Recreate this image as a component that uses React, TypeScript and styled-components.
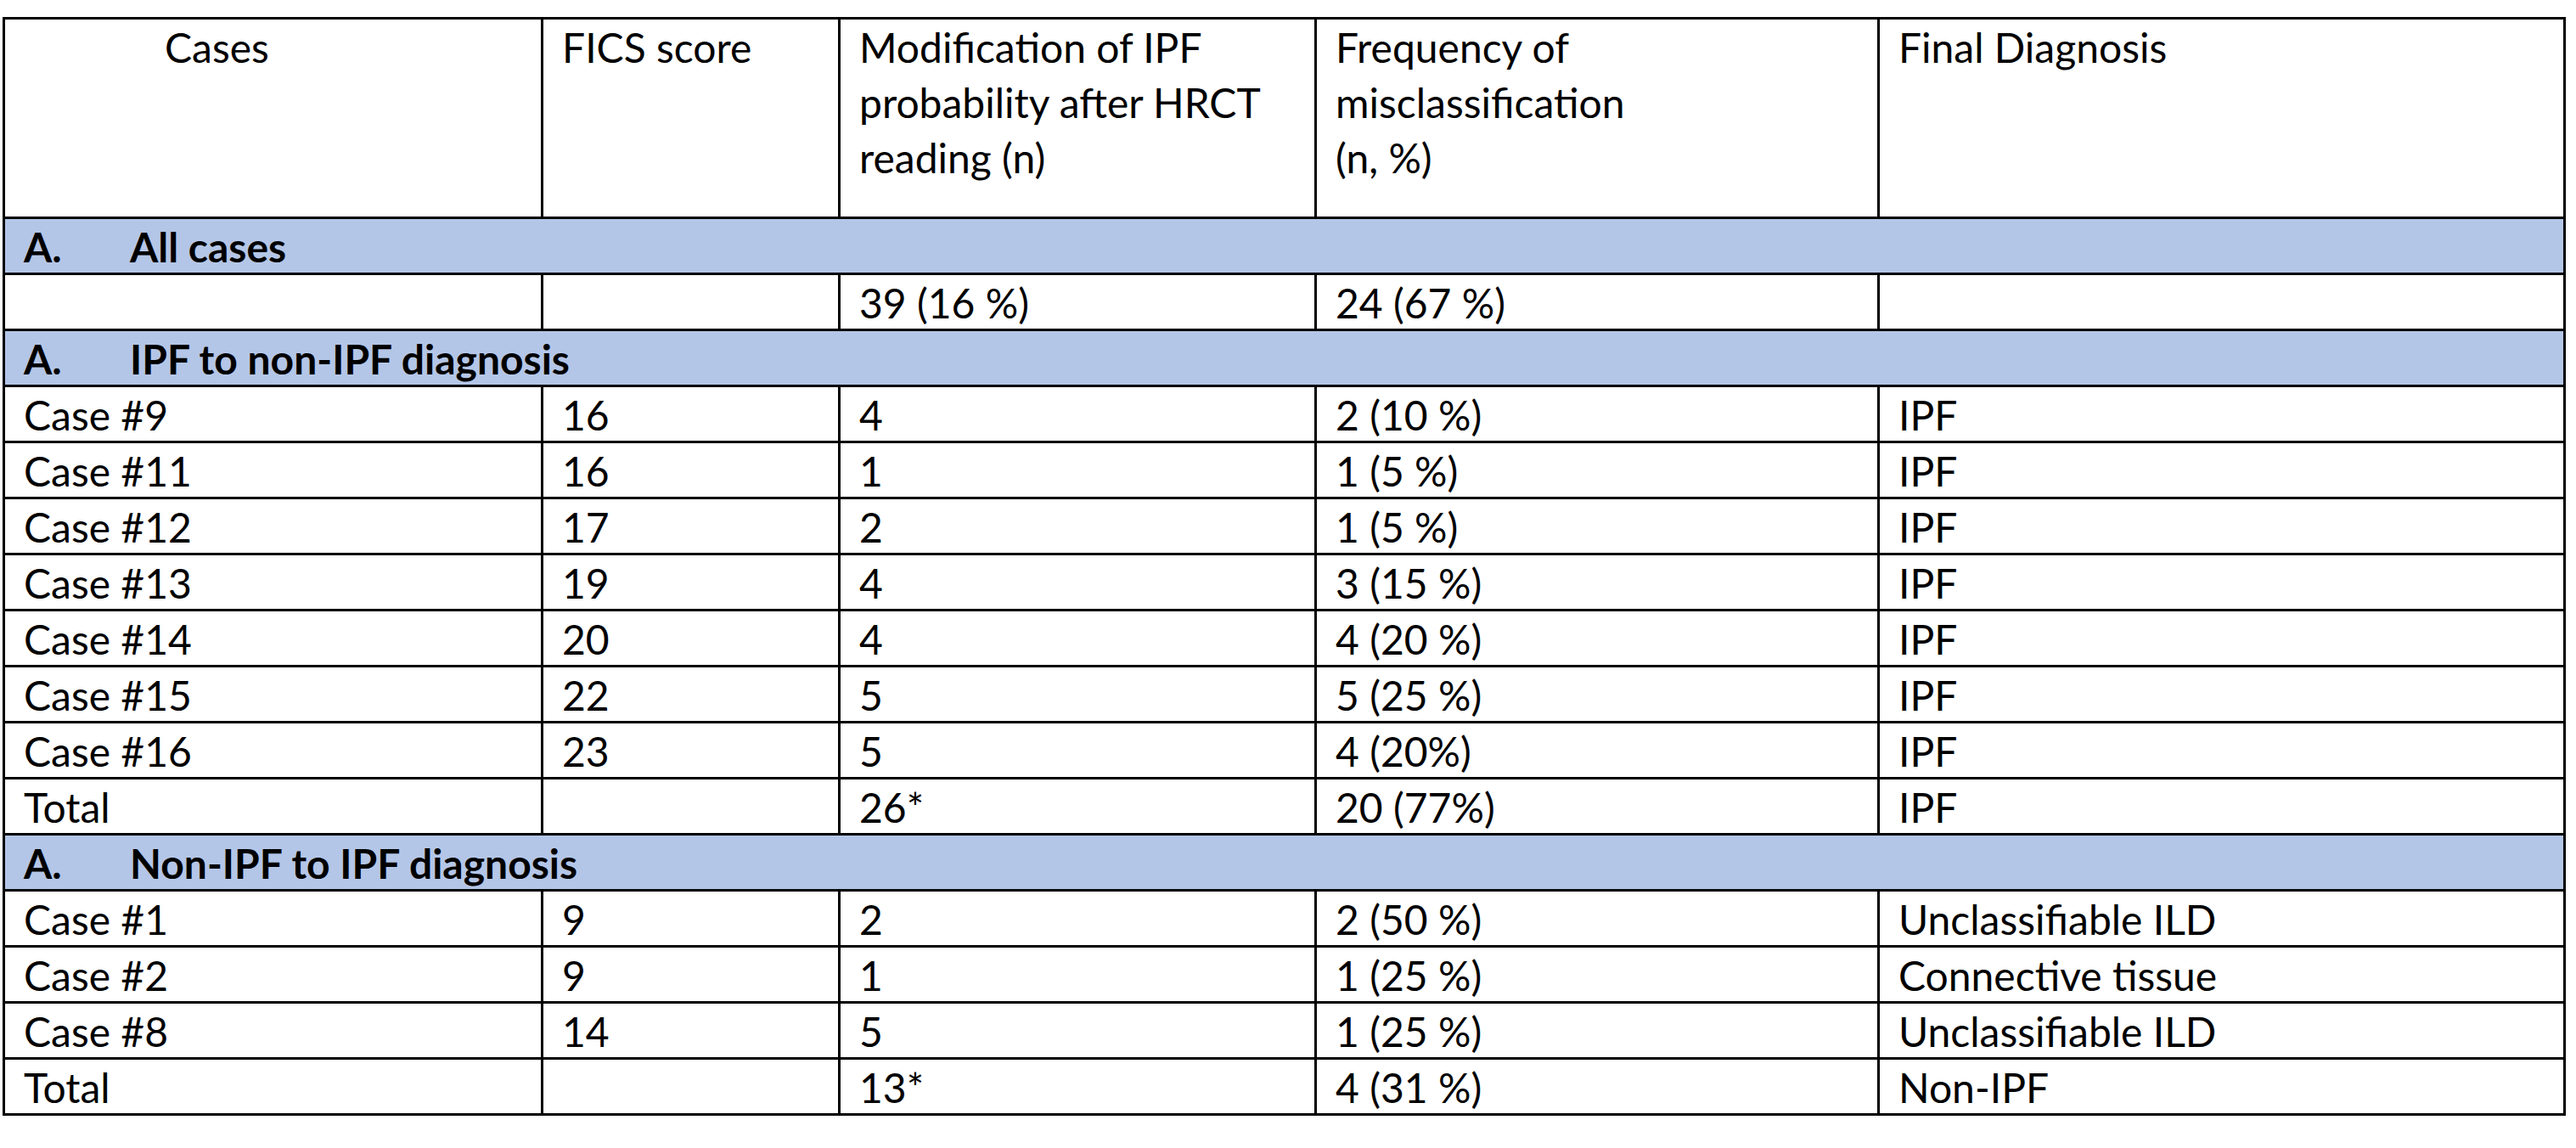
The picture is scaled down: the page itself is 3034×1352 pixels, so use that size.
import React from "react";
import styled, { createGlobalStyle } from "styled-components";

const GlobalStyle = createGlobalStyle`
    html,
    body {
        margin: 0;
        padding: 0;
        background: #ffffff;
    }
    body {
        font-family: Lato, "Liberation Sans", sans-serif;
        color: #000000;
    }
`;

type Row = [string, string, string, string, string];

interface Section {
    title: string;
    rows: Array<Row>;
}

const sections: Array<Section> = [
    {
        title: "All cases",
        rows: [["", "", "39 (16 %)", "24 (67 %)", ""]],
    },
    {
        title: "IPF to non-IPF diagnosis",
        rows: [
            ["Case #9", "16", "4", "2 (10 %)", "IPF"],
            ["Case #11", "16", "1", "1 (5 %)", "IPF"],
            ["Case #12", "17", "2", "1 (5 %)", "IPF"],
            ["Case #13", "19", "4", "3 (15 %)", "IPF"],
            ["Case #14", "20", "4", "4 (20 %)", "IPF"],
            ["Case #15", "22", "5", "5 (25 %)", "IPF"],
            ["Case #16", "23", "5", "4 (20%)", "IPF"],
            ["Total", "", "26*", "20 (77%)", "IPF"],
        ],
    },
    {
        title: "Non-IPF to IPF diagnosis",
        rows: [
            ["Case #1", "9", "2", "2 (50 %)", "Unclassifiable ILD"],
            ["Case #2", "9", "1", "1 (25 %)", "Connective tissue"],
            ["Case #8", "14", "5", "1 (25 %)", "Unclassifiable ILD"],
            ["Total", "", "13*", "4 (31 %)", "Non-IPF"],
        ],
    },
];

const headers: Array<{ lines: Array<string>; indent?: number }> = [
    { lines: ["Cases"], indent: 188 },
    { lines: ["FICS score"] },
    { lines: ["Modification of IPF", "probability after HRCT", "reading (n)"] },
    { lines: ["Frequency of", "misclassification", "(n, %)"] },
    { lines: ["Final Diagnosis"] },
];

const App = () => {
    return (
        <>
            <GlobalStyle />
            <Page>
                <Table>
                    {headers.map((header, key) => (
                        <HeadCell key={key} indent={header.indent}>
                            {header.lines.map((line, index) => (
                                <div key={index}>{line}</div>
                            ))}
                        </HeadCell>
                    ))}
                    {sections.map((section, key) => (
                        <React.Fragment key={key}>
                            <SectionRow>
                                <SectionMarker>A.</SectionMarker>
                                <span>{section.title}</span>
                            </SectionRow>
                            {section.rows.map((row, index) => (
                                <React.Fragment key={index}>
                                    {row.map((value, col) => (
                                        <Cell key={col}>{value}</Cell>
                                    ))}
                                </React.Fragment>
                            ))}
                        </React.Fragment>
                    ))}
                </Table>
            </Page>
        </>
    );
};

export default App;

const Page = styled.div`
    width: 3034px;
    height: 1352px;
    box-sizing: border-box;
    padding: 20px 0 0 3px;
`;

const Table = styled.div`
    display: grid;
    grid-template-columns: 634px 350px 561px 663px 808px;
    grid-template-rows: 235px;
    grid-auto-rows: 66px;
    width: 3019px;
    box-sizing: border-box;
    border-top: 3px solid #000000;
    border-left: 3px solid #000000;
    font-size: 48px;
    line-height: 65px;
`;

const Cell = styled.div`
    box-sizing: border-box;
    border-right: 3px solid #000000;
    border-bottom: 3px solid #000000;
    padding: 0 0 0 22px;
    white-space: nowrap;
    overflow: hidden;
`;

const HeadCell = styled(Cell)<{ indent?: number }>`
    padding-left: ${(props) => props.indent ?? 22}px;
`;

const SectionRow = styled.div`
    grid-column: 1 / -1;
    display: flex;
    box-sizing: border-box;
    border-right: 3px solid #000000;
    border-bottom: 3px solid #000000;
    padding-left: 22px;
    background-color: #b4c6e7;
    font-weight: 700;
    white-space: nowrap;
`;

const SectionMarker = styled.span`
    width: 125px;
    flex-shrink: 0;
`;
